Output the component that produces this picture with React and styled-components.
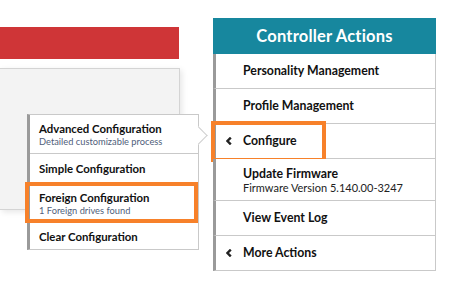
import React from "react";
import styled, { createGlobalStyle } from "styled-components";

const GlobalStyle = createGlobalStyle`
  html, body {
    margin: 0;
    padding: 0;
    background: #fff;
    overflow: hidden;
  }
  body {
    font-family: Lato, "Open Sans", sans-serif;
    color: #111;
  }
`;

const Page = styled.div`
  position: relative;
  width: 464px;
  height: 290px;
  display: flex;
  gap: 33px;
`;

const LeftColumn = styled.div`
  width: 180px;
  padding-top: 27px;
  display: flex;
  flex-direction: column;
  gap: 9px;
`;

const AlertBar = styled.div`
  height: 32px;
  width: 179px;
  background: #cf3537;
`;

const DetailPanel = styled.div`
  height: 140px;
  background: #f3f3f3;
  border: 1px solid #d4d4d4;
  border-left: none;
  box-shadow: 2px 2px 6px rgba(0, 0, 0, 0.1);
`;

const RightColumn = styled.div`
  width: 223px;
  padding-top: 18px;
`;

const PanelHeader = styled.div`
  height: 36px;
  background: #17879e;
  color: #fff;
  font-size: 16.5px;
  font-weight: 700;
  letter-spacing: 0.2px;
  display: flex;
  align-items: center;
  justify-content: center;
`;

const ActionRow = styled.div`
  position: relative;
  height: ${(p) => (p.$tall ? 41 : 34)}px;
  border-left: 3px solid #9a9a9a;
  border-right: 1px solid #c9c9c9;
  border-bottom: 1px solid #c9c9c9;
  display: flex;
  align-items: center;
  padding-left: 10px;
  background: #fff;
`;

const ChevronSlot = styled.span`
  width: 17px;
  display: flex;
  align-items: center;
`;

const RowText = styled.div`
  display: flex;
  flex-direction: column;
`;

const RowTitle = styled.span`
  font-size: 12.3px;
  font-weight: 700;
  line-height: 16px;
  color: #111;
`;

const RowSub = styled.span`
  font-size: 11px;
  line-height: 12px;
  color: #222;
`;

const Highlight = styled.div`
  position: absolute;
  box-sizing: border-box;
  border: 4px solid #f7812a;
  left: ${(p) => p.$left}px;
  top: ${(p) => p.$top}px;
  width: ${(p) => p.$width}px;
  height: ${(p) => p.$height}px;
  pointer-events: none;
`;

const Caption = styled.div`
  margin-top: 16px;
  padding-left: 4px;
  font-size: 13px;
  font-weight: 700;
  color: #222;
`;

const SubMenu = styled.div`
  position: absolute;
  left: 27px;
  top: 114px;
  width: 168px;
  background: #fff;
  border: 1px solid #c9c9c9;
  border-left: 3px solid #9a9a9a;
`;

const Pointer = styled.div`
  position: absolute;
  right: -7px;
  top: 14px;
  width: 12px;
  height: 12px;
  background: #fff;
  border-top: 1px solid #cfcfcf;
  border-right: 1px solid #cfcfcf;
  transform: rotate(45deg);
`;

const SubItem = styled.div`
  position: relative;
  padding: ${(p) => (p.$sub || p.$last ? "6px 9px 5px" : "7px 9px")};
  border-bottom: ${(p) => (p.$last ? "none" : "1px solid #c9c9c9")};
  display: flex;
  flex-direction: column;
`;

const SubTitle = styled.span`
  font-size: 11.4px;
  font-weight: 700;
  line-height: 15px;
  color: #111;
`;

const SubNote = styled.span`
  font-size: 9.3px;
  line-height: 12px;
  color: #50607a;
`;

const Chevron = () => (
  <svg width="6" height="8" viewBox="0 0 6 8">
    <path d="M4.8 0.6 L1.4 4 L4.8 7.4" fill="none" stroke="#222" strokeWidth="2.4" />
  </svg>
);

const actions = [
  { title: "Personality Management" },
  { title: "Profile Management" },
  { title: "Configure", chevron: true, highlight: true },
  { title: "Update Firmware", sub: "Firmware Version 5.140.00-3247" },
  { title: "View Event Log" },
  { title: "More Actions", chevron: true },
];

const configItems = [
  { title: "Advanced Configuration", sub: "Detailed customizable process" },
  { title: "Simple Configuration" },
  { title: "Foreign Configuration", sub: "1 Foreign drives found", highlight: true },
  { title: "Clear Configuration" },
];

export default function App() {
  return (
    <>
      <GlobalStyle />
      <Page>
        <LeftColumn>
          <AlertBar />
          <DetailPanel />
        </LeftColumn>
        <RightColumn>
          <PanelHeader>Controller Actions</PanelHeader>
          {actions.map((a) => (
            <ActionRow key={a.title} $tall={!!a.sub}>
              <ChevronSlot>{a.chevron && <Chevron />}</ChevronSlot>
              <RowText>
                <RowTitle>{a.title}</RowTitle>
                {a.sub && <RowSub>{a.sub}</RowSub>}
              </RowText>
              {a.highlight && <Highlight $left={-5} $top={-3} $width={115} $height={41} />}
            </ActionRow>
          ))}
          <Caption>Selected Element: Configure</Caption>
        </RightColumn>
        <SubMenu>
          <Pointer />
          {configItems.map((c, i) => (
            <SubItem key={c.title} $sub={!!c.sub} $last={i === configItems.length - 1}>
              <SubTitle>{c.title}</SubTitle>
              {c.sub && <SubNote>{c.sub}</SubNote>}
              {c.highlight && <Highlight $left={-5} $top={-2} $width={173} $height={41} />}
            </SubItem>
          ))}
        </SubMenu>
      </Page>
    </>
  );
}
